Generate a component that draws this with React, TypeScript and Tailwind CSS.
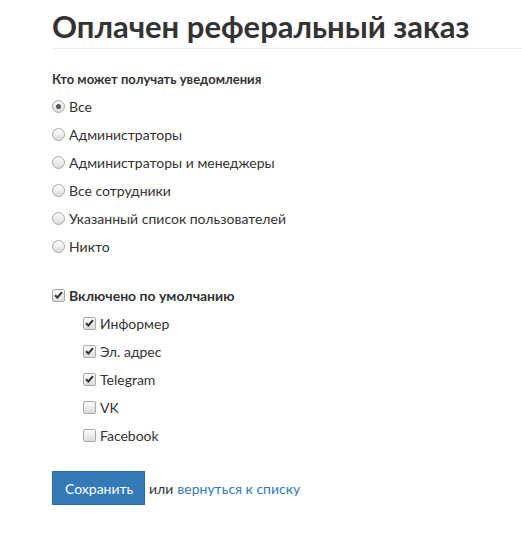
import React from 'react';

const Radio = ({ checked }: { checked?: boolean }) => (
  <span className="w-[13px] h-[13px] rounded-full border border-[#a9a9a9] bg-gradient-to-b from-[#fdfdfd] to-[#dcdcdc] flex items-center justify-center shrink-0">
    {checked && <span className="w-[5px] h-[5px] rounded-full bg-[#555]" />}
  </span>
);

const Box = ({ checked }: { checked?: boolean }) => (
  <span className="w-[13px] h-[13px] rounded-[2px] border border-[#a9a9a9] bg-gradient-to-b from-[#fdfdfd] to-[#dcdcdc] flex items-center justify-center shrink-0">
    {checked && (
      <svg width="9" height="8" viewBox="0 0 9 8">
        <path d="M1 4.2 L3.4 6.5 L8 1.2" fill="none" stroke="#333" strokeWidth="2" />
      </svg>
    )}
  </span>
);

const App = () => {
  const options = [
    'Все',
    'Администраторы',
    'Администраторы и менеджеры',
    'Все сотрудники',
    'Указанный список пользователей',
    'Никто',
  ];
  const channels = [
    { name: 'Информер', on: true },
    { name: 'Эл. адрес', on: true },
    { name: 'Telegram', on: true },
    { name: 'VK', on: false },
    { name: 'Facebook', on: false },
  ];

  return (
    <div className="w-[522px] h-[541px] bg-white pl-[52px] text-[#333] font-['Lato',sans-serif] text-[14px]">
      <h1 className="pt-[9px] pb-[5px] text-[31px] leading-[34px] font-bold border-b border-[#eee]">
        Оплачен реферальный заказ
      </h1>

      <div className="mt-[21px] text-[13px] font-bold leading-[18px]">Кто может получать уведомления</div>
      <ul className="mt-[4px]">
        {options.map((o, i) => (
          <li key={i} className="flex items-center gap-[4px] h-[28px]">
            <Radio checked={i === 0} />
            <span>{o}</span>
          </li>
        ))}
      </ul>

      <div className="mt-[21px] flex items-center gap-[4px] h-[28px] font-bold">
        <Box checked />
        <span>Включено по умолчанию</span>
      </div>
      <ul className="pl-[31px]">
        {channels.map((c, i) => (
          <li key={i} className="flex items-center gap-[4px] h-[28px]">
            <Box checked={c.on} />
            <span>{c.name}</span>
          </li>
        ))}
      </ul>

      <div className="mt-[22px] flex items-center">
        <button className="bg-[#337ab7] border border-[#2e6da4] text-white px-[12px] h-[34px] w-[93px] text-[14px]">
          Сохранить
        </button>
        <span className="ml-[4px]">или </span>
        <a className="ml-[4px] text-[#337ab7]">вернуться к списку</a>
      </div>
    </div>
  );
};

export default App;
